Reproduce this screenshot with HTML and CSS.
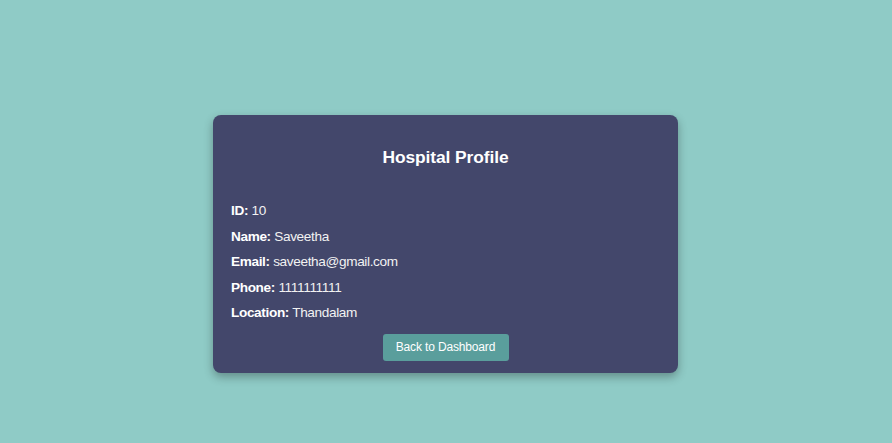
FILE: index.html
```html
<!DOCTYPE html>
<html>
<head>
<meta charset="utf-8">
<link rel="stylesheet" href="styles.css">
</head>
<body>
<main class="page">
  <section class="card">
    <h2 class="title">Hospital Profile</h2>
    <div class="rows">
      <p class="row"><strong>ID:</strong> 10</p>
      <p class="row"><strong>Name:</strong> Saveetha</p>
      <p class="row"><strong>Email:</strong> saveetha@gmail.com</p>
      <p class="row"><strong>Phone:</strong> 1111111111</p>
      <p class="row"><strong>Location:</strong> Thandalam</p>
    </div>
    <div class="actions">
      <button class="btn">Back to Dashboard</button>
    </div>
  </section>
</main>
</body>
</html>
```

FILE: styles.css
```css
html, body {
  margin: 0;
  padding: 0;
}
body {
  background: #8fcbc6;
  font-family: "Liberation Sans", Arial, sans-serif;
  height: 443px;
  overflow: hidden;
}
.page {
  display: flex;
  justify-content: center;
  padding-top: 115px;
  padding-right: 1px;
}
.card {
  width: 465px;
  height: 258px;
  box-sizing: border-box;
  background: #43476b;
  border-radius: 8px;
  box-shadow: 0 4px 10px rgba(0, 0, 0, 0.3);
  padding: 32px 18px 12px;
  color: #fff;
  display: flex;
  flex-direction: column;
}
.title {
  margin: 0;
  font-size: 17.4px;
  line-height: 21px;
  letter-spacing: -0.1px;
  text-align: center;
  font-weight: bold;
}
.rows {
  margin-top: 30px;
}
.row {
  margin: 0;
  font-size: 13.6px;
  line-height: 25.5px;
  letter-spacing: -0.35px;
  color: #f2f2f2;
}
.row strong {
  color: #fff;
}
.actions {
  margin-top: 8px;
  display: flex;
  justify-content: center;
}
.btn {
  width: 126px;
  height: 27px;
  background: #5a9e9c;
  color: #fff;
  border: none;
  border-radius: 3px;
  font-family: "Liberation Sans", Arial, sans-serif;
  font-size: 12px;
  letter-spacing: -0.15px;
  padding: 0;
}
```
